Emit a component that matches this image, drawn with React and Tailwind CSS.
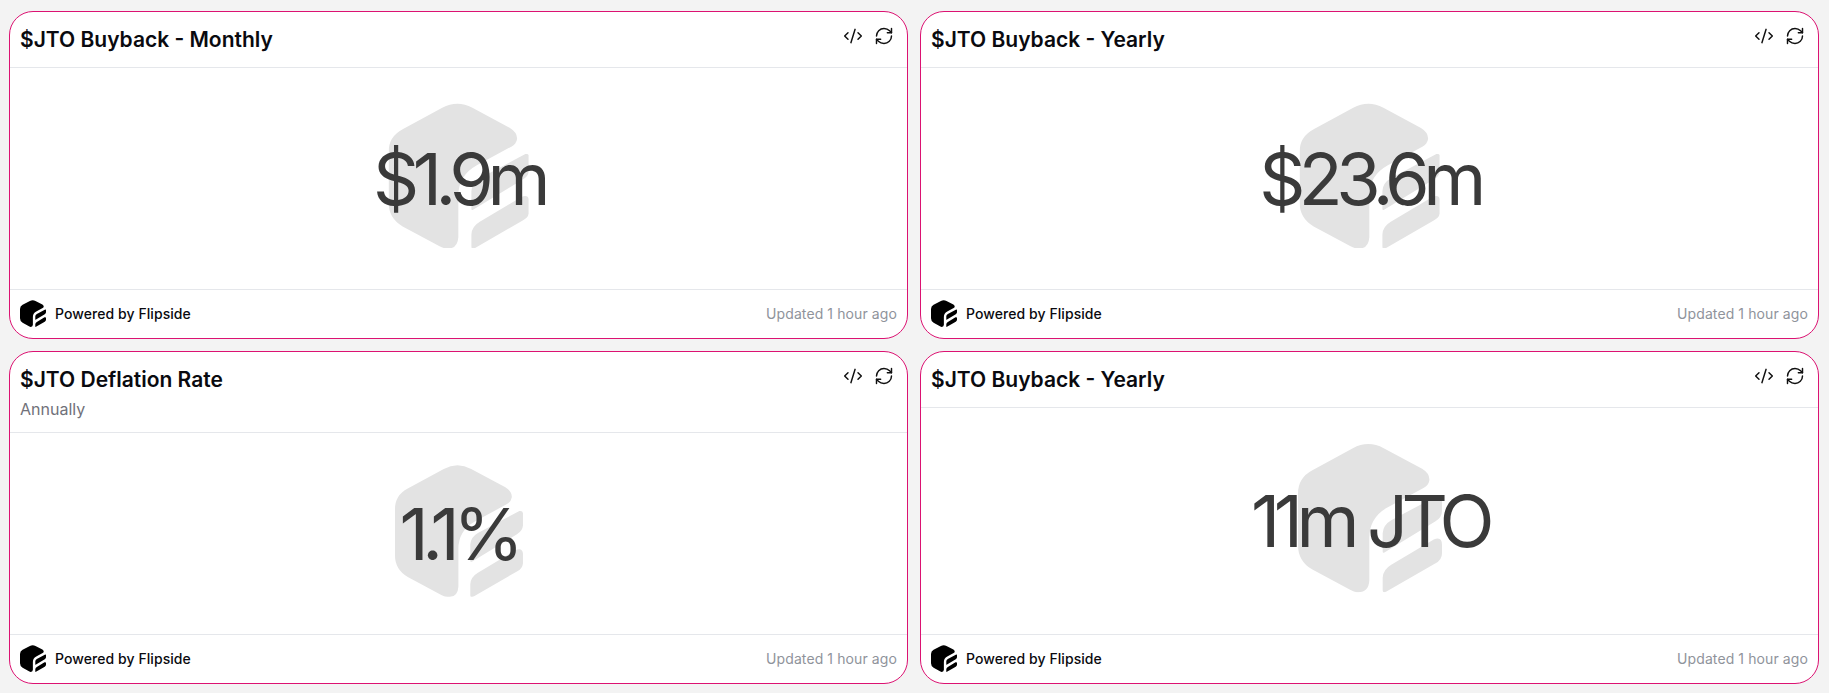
import { CodeXml, RefreshCw } from 'lucide-react';

const cards = [
  { title: '$JTO Buyback - Monthly', value: '$1.9m', row: 'h-[328px]' },
  { title: '$JTO Buyback - Yearly', value: '$23.6m', row: 'h-[328px]' },
  { title: '$JTO Deflation Rate', subtitle: 'Annually', value: '1.1%', row: 'h-[333px]' },
  { title: '$JTO Buyback - Yearly', value: '11m JTO', row: 'h-[333px]' },
];

const FlipsideLogo = ({ className, fill }) => (
  <svg viewBox="0 0 420 435" className={className} fill={fill}>
    <path d="M160 14 Q205 -10 250 14 L362 74 Q385 88 383 108 Q381 122 366 130 L262 186 Q208 216 208 276 L208 400 Q206 436 172 434 Q164 433 152 427 L42 368 Q0 344 0 296 L0 146 Q0 100 42 78 Z" />
    <path d="M247 316 L247 262 Q248 238 272 224 L408 152 Q420 150 420 162 L420 196 Q420 216 400 228 L252 318 Q247 320 247 316 Z" />
    <path d="M247 428 L247 392 Q248 368 272 354 L396 280 Q420 270 420 296 L420 320 Q420 340 400 350 L258 432 Q247 438 247 428 Z" />
  </svg>
);

const StatCard = ({ title, subtitle, value, row }) => (
  <div className={`flex flex-col overflow-hidden rounded-3xl border border-[#dc1272] bg-white ${row}`}>
    <div className="flex shrink-0 items-start justify-between border-b border-[#e5e7eb] pl-[10px] pr-[13px] pt-[12px] pb-[11px]">
      <div>
        <h3 className="text-[21px] leading-[32px] font-semibold text-[#0a0a0f]">{title}</h3>
        {subtitle && <p className="mt-[1px] text-[16px] leading-[24px] text-[#71717a]">{subtitle}</p>}
      </div>
      <div className="flex items-center gap-[11px] pt-[2px] text-[#111]">
        <CodeXml className="h-5 w-5" strokeWidth={1.75} />
        <RefreshCw className="h-5 w-5" strokeWidth={1.75} />
      </div>
    </div>

    <div className="relative flex min-h-0 flex-1 items-center justify-center">
      <FlipsideLogo className="absolute left-1/2 top-[calc(50%-3px)] h-[66%] -translate-x-1/2 -translate-y-1/2" fill="#e3e3e3" />
      <span className="relative text-[72px] leading-none font-normal tracking-[-0.09em] text-[#3a3a3a]">{value}</span>
    </div>

    <div className="flex h-[49px] shrink-0 items-center justify-between border-t border-[#e5e7eb] px-[10px] pb-[1px]">
      <div className="flex items-center gap-[9px]">
        <FlipsideLogo className="h-[27px] w-[26px]" fill="#000" />
        <span className="text-[14px] font-medium tracking-[0.005em] text-[#0a0a0f]">Powered by Flipside</span>
      </div>
      <span className="text-[14px] tracking-[0.1px] text-[#8f939b]">Updated 1 hour ago</span>
    </div>
  </div>
);

export default function App() {
  return (
    <div className="h-[693px] w-[1829px] overflow-hidden bg-[#f3f3f3] pl-[9px] pr-[10px] pt-[11px] font-['Inter',sans-serif]">
      <div className="grid grid-cols-2 gap-x-[12px] gap-y-[12px]">
        {cards.map((card, i) => (
          <StatCard key={i} {...card} />
        ))}
      </div>
    </div>
  );
}
